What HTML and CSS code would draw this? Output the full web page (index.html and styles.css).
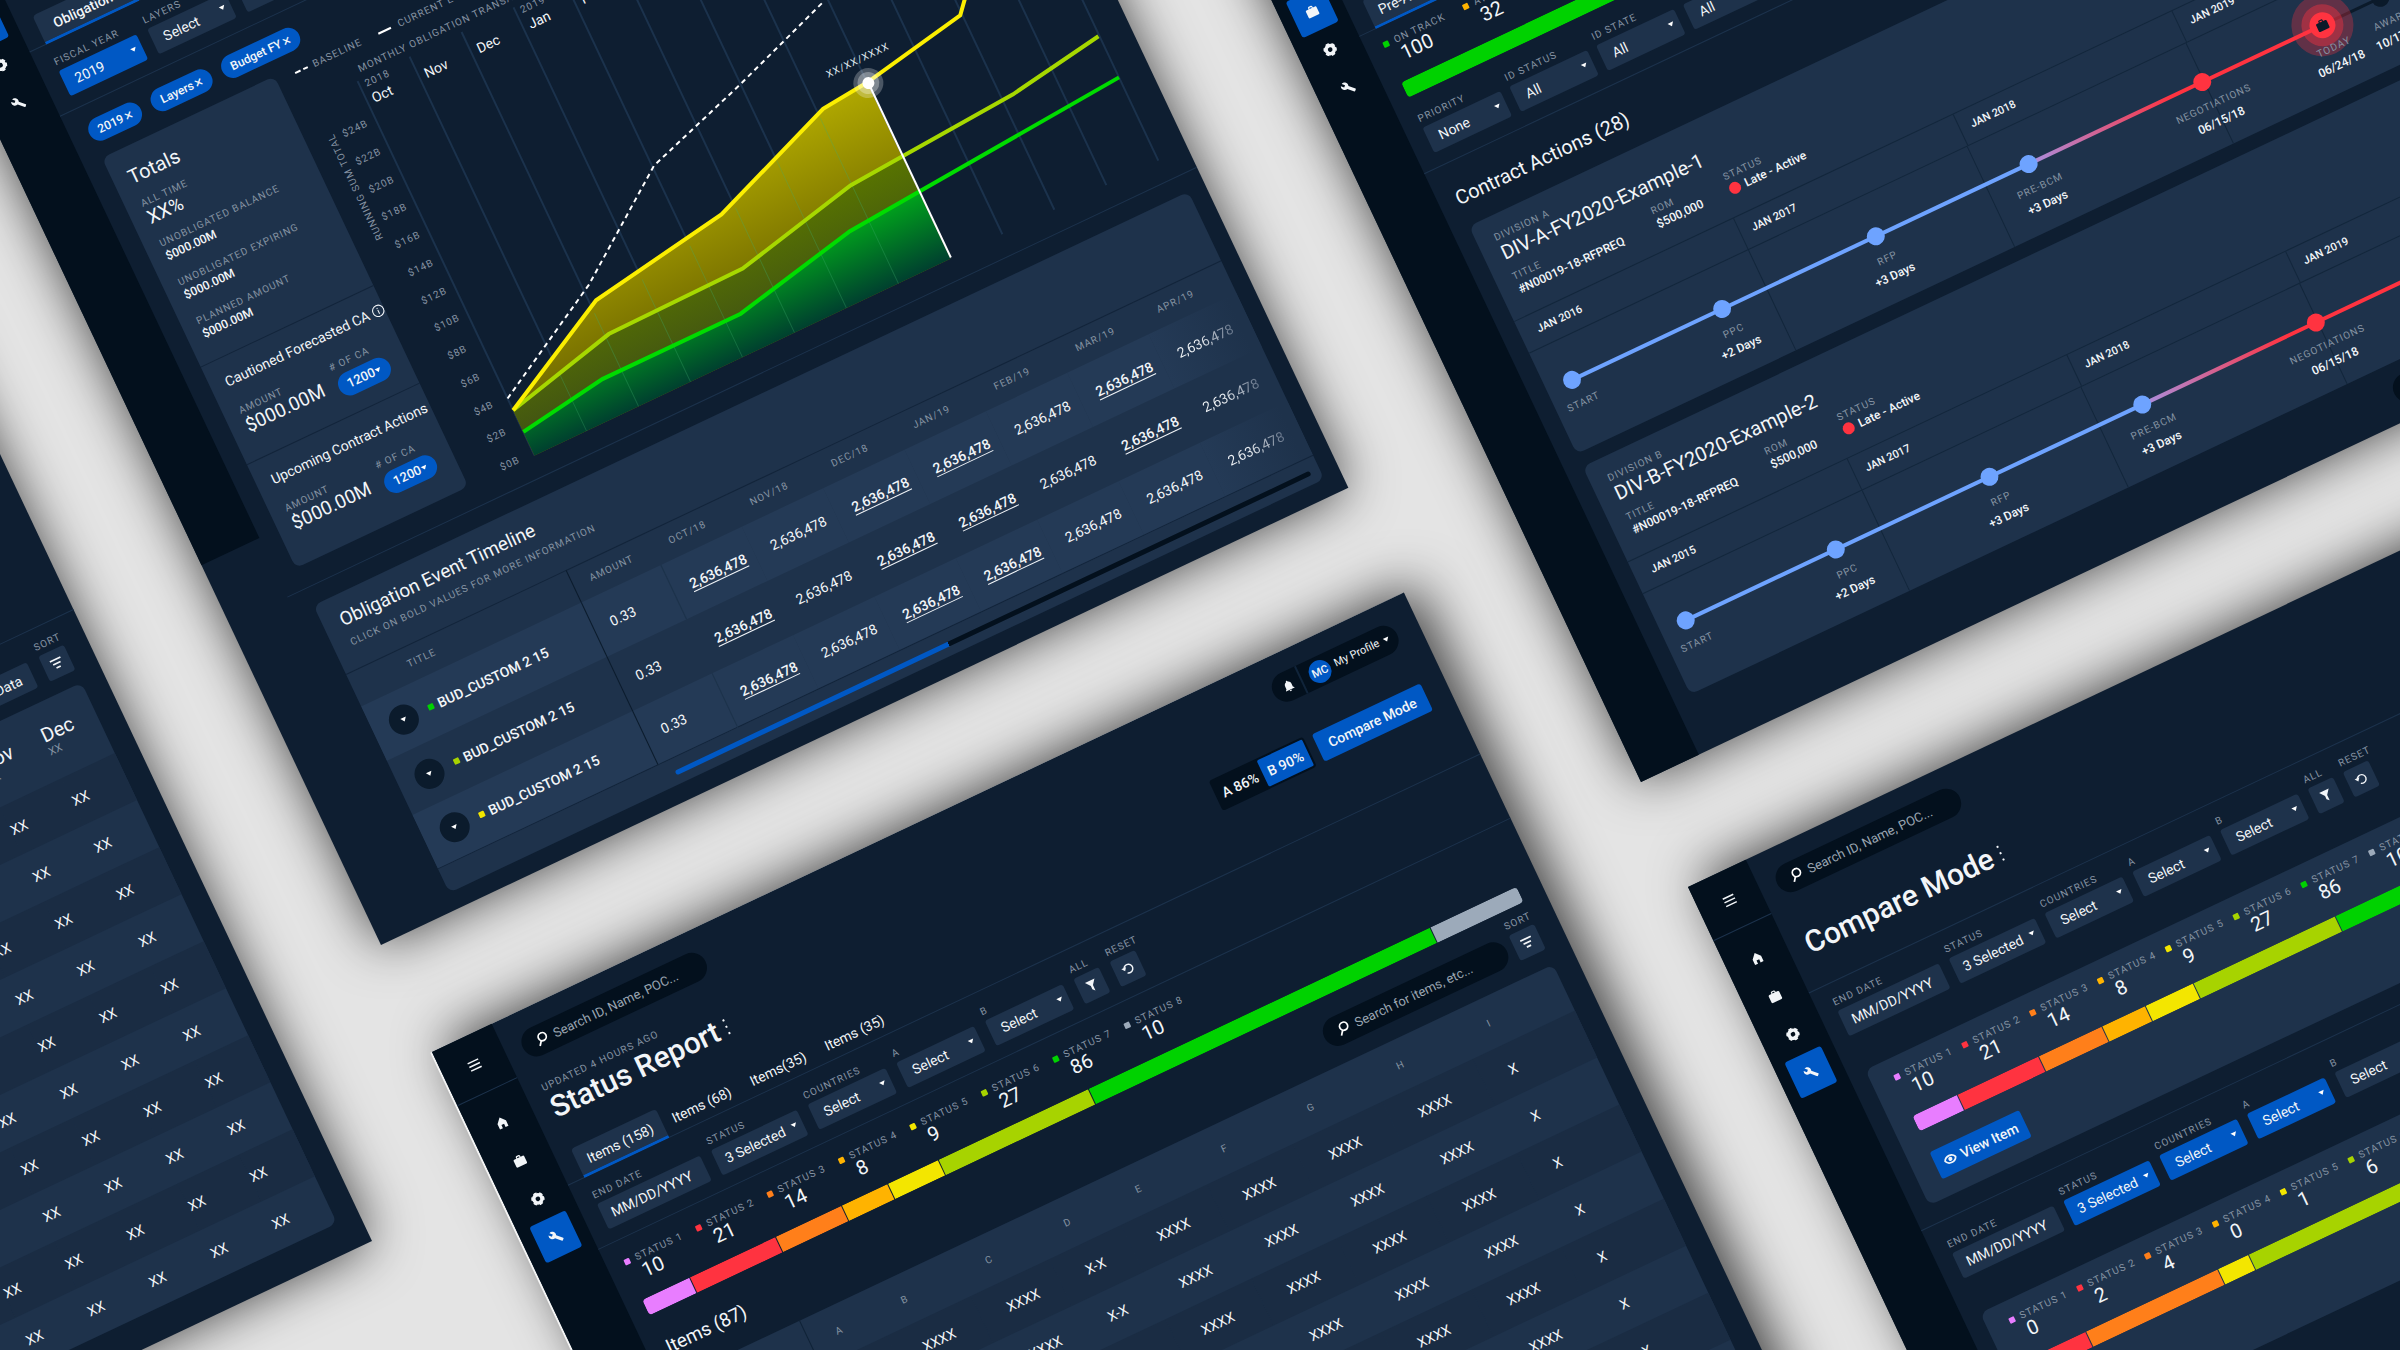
FILE: index.html
```html
<!DOCTYPE html>
<html lang="en">
<head>
<meta charset="utf-8">
<title>Program dashboards</title>
<link rel="stylesheet" href="styles.css">
</head>
<body>
<svg class="sprite" aria-hidden="true">
  <symbol id="i-menu" viewBox="0 0 24 24"><path d="M2 5h20M2 12h20M2 19h20" stroke="currentColor" stroke-width="2.500"/></symbol>
  <symbol id="i-home" viewBox="0 0 24 24"><path fill="currentColor" d="M9.500 21v-6h5v6H20v-10L12 2 4 11v10z"/></symbol>
  <symbol id="i-case" viewBox="0 0 24 24"><path fill="currentColor" d="M20 6h-4V4c0-1.110-.89-2-2-2h-4c-1.110 0-2 .89-2 2v2H4c-1.110 0-1.990.89-1.990 2L2 19c0 1.110.89 2 2 2h16c1.110 0 2-.89 2-2V8c0-1.110-.89-2-2-2zm-6 0h-4V4h4v2z"/></symbol>
  <symbol id="i-gear" viewBox="0 0 24 24"><circle cx="12" cy="12" r="7" fill="none" stroke="currentColor" stroke-width="6"/><circle cx="12" cy="12" r="10" fill="none" stroke="currentColor" stroke-width="3" stroke-dasharray="6 4.470"/></symbol>
  <symbol id="i-tool" viewBox="0 0 24 24"><path fill="currentColor" d="M22.700 19l-9.100-9.100c.9-2.300.4-5-1.500-6.900-2-2-5-2.400-7.400-1.300L9 6 6 9 1.600 4.700C.4 7.100.9 10.100 2.900 12.100c1.900 1.900 4.600 2.400 6.900 1.500l9.100 9.100c.4.4 1 .4 1.400 0l2.300-2.300c.5-.4.5-1.100.1-1.400z"/></symbol>
  <symbol id="i-search" viewBox="0 0 24 24"><circle cx="14" cy="9" r="7" fill="none" stroke="currentColor" stroke-width="3"/><path d="M10 14l-6 8" stroke="currentColor" stroke-width="3"/></symbol>
  <symbol id="i-bell" viewBox="0 0 24 24"><path fill="currentColor" d="M12 22c1.100 0 2-.9 2-2h-4c0 1.100.89 2 2 2zm6-6v-5c0-3.070-1.640-5.640-4.500-6.320V4c0-.83-.67-1.500-1.500-1.500s-1.500.67-1.500 1.500v.68C7.630 5.360 6 7.920 6 11v5l-2 2v1h16v-1l-2-2z"/></symbol>
  <symbol id="i-filter" viewBox="0 0 24 24"><path fill="currentColor" d="M3 3h18l-7 9v10l-4-4v-6z"/></symbol>
  <symbol id="i-reset" viewBox="0 0 24 24"><path d="M5.500 9.500A7.500 7.500 0 1 1 8 18.500" fill="none" stroke="currentColor" stroke-width="2.500"/><path fill="currentColor" d="M1 8h9l-4.500 6z"/></symbol>
  <symbol id="i-sort" viewBox="0 0 24 24"><path d="M2 5h20M5 12h14M8 19h8" stroke="currentColor" stroke-width="3"/></symbol>
  <symbol id="i-eye" viewBox="0 0 24 24"><path d="M2 12c4-8.500 16-8.500 20 0-4 8.500-16 8.500-20 0z" fill="none" stroke="currentColor" stroke-width="3"/><circle cx="12" cy="12" r="3.500" fill="currentColor"/></symbol>
  <symbol id="i-info" viewBox="0 0 24 24"><circle cx="12" cy="12" r="10.500" fill="none" stroke="currentColor" stroke-width="2"/><path d="M12 10v8M12 6v2" stroke="currentColor" stroke-width="2"/></symbol>
  <symbol id="i-dots" viewBox="0 0 4 18"><path d="M1 1h2v2H1zM1 8h2v2H1zM1 15h2v2H1z" fill="currentColor"/></symbol>
</svg>

<div class="canvas">

  <!-- Monthly table -->
  <section class="window window-months" aria-label="Monthly data">
    <main class="main">
      <div class="toolbar">
        <button class="btn btn-dark" type="button">Export Data</button>
        <div class="field"><label for="sort-months">SORT</label><button class="icon-btn" id="sort-months" type="button"><svg class="icon"><use href="#i-sort"/></svg></button></div>
      </div>
      <table class="months">
        <colgroup><col><col class="c68"><col class="c68"><col class="c68"><col class="c68"><col class="c59"></colgroup>
        <thead><tr><th></th><th>Aug<small>XX</small></th><th>Sep<small>XX</small></th><th>Oct<small>XX</small></th><th>Nov<small>XX</small></th><th>Dec<small>XX</small></th></tr></thead>
        <tbody>
          <tr><td></td><td></td><td></td><td></td><td>XX</td><td>XX</td></tr>
          <tr><td></td><td></td><td></td><td></td><td>XX</td><td>XX</td></tr>
          <tr><td></td><td></td><td></td><td>XX</td><td>XX</td><td>XX</td></tr>
          <tr><td></td><td></td><td></td><td>XX</td><td>XX</td><td>XX</td></tr>
          <tr><td></td><td></td><td></td><td>XX</td><td>XX</td><td>XX</td></tr>
          <tr><td></td><td></td><td>XX</td><td>XX</td><td>XX</td><td>XX</td></tr>
          <tr><td></td><td></td><td>XX</td><td>XX</td><td>XX</td><td>XX</td></tr>
          <tr><td></td><td></td><td>XX</td><td>XX</td><td>XX</td><td>XX</td></tr>
          <tr><td></td><td>XX</td><td>XX</td><td>XX</td><td>XX</td><td>XX</td></tr>
          <tr><td></td><td>XX</td><td>XX</td><td>XX</td><td>XX</td><td>XX</td></tr>
        </tbody>
      </table>
    </main>
  </section>

  <!-- Obligations -->
  <section class="window window-obligations" aria-label="Obligations">
    <nav class="sidebar">
      <button class="menu" type="button" aria-label="Menu"><svg class="icon"><use href="#i-menu"/></svg></button>
      <a href="#" aria-label="Home"><svg class="icon"><use href="#i-home"/></svg></a>
      <a href="#" aria-label="Contracts" class="active"><svg class="icon"><use href="#i-case"/></svg></a>
      <a href="#" aria-label="Settings"><svg class="icon"><use href="#i-gear"/></svg></a>
      <a href="#" aria-label="Tools"><svg class="icon"><use href="#i-tool"/></svg></a>
    </nav>
    <main class="main">
      <nav class="tabs tabs-wide"><a href="#" class="on">Obligations</a></nav>
      <form class="filters">
        <div class="field"><label for="o-fy">FISCAL YEAR</label><span class="select blue"><select id="o-fy"><option>2019</option></select></span></div>
        <div class="field"><label for="o-ly">LAYERS</label><span class="select"><select id="o-ly"><option>Select</option></select></span></div>
        <div class="field"><label for="o-bu">BUDGET</label><span class="select"><select id="o-bu"><option>Select</option></select></span></div>
      </form>
      <div class="tags">
        <button class="pill" type="button">2019 <i>×</i></button>
        <button class="pill" type="button">Layers <i>×</i></button>
        <button class="pill" type="button">Budget FY <i>×</i></button>
      </div>
      <div class="overview">
        <aside class="totals">
          <div class="totals-main">
            <h2>Totals</h2>
            <dl>
              <dt>ALL TIME</dt><dd class="big">XX%</dd>
              <dt>UNOBLIGATED BALANCE</dt><dd>$000.00M</dd>
              <dt>UNOBLIGATED EXPIRING</dt><dd>$000.00M</dd>
              <dt>PLANNED AMOUNT</dt><dd>$000.00M</dd>
            </dl>
          </div>
          <div class="forecast">
            <h3>Cautioned Forecasted CA <svg class="icon"><use href="#i-info"/></svg></h3>
            <div class="forecast-row">
              <div><span class="label">AMOUNT</span><strong>$000.00M</strong></div>
              <div><span class="label">&#35; OF CA</span><button class="pill pill-count" type="button">1200<span class="caret"></span></button></div>
            </div>
          </div>
          <div class="forecast">
            <h3>Upcoming Contract Actions</h3>
            <div class="forecast-row">
              <div><span class="label">AMOUNT</span><strong>$000.00M</strong></div>
              <div><span class="label">&#35; OF CA</span><button class="pill pill-count" type="button">1200<span class="caret"></span></button></div>
            </div>
          </div>
        </aside>
        <svg class="chart" viewBox="275 -831 777 454" role="img" aria-label="Monthly obligation transactions">
          <defs>
            <linearGradient id="g-y" x1="0" y1="0" x2="0" y2="1"><stop offset="0" stop-color="#b0a800"/><stop offset="1" stop-color="#5c5500"/></linearGradient>
            <linearGradient id="g-l" x1="0" y1="0" x2="0" y2="1"><stop offset="0" stop-color="#587400"/><stop offset="1" stop-color="#3c4c18"/></linearGradient>
            <linearGradient id="g-g" x1="0" y1="0" x2="0" y2="1"><stop offset="0" stop-color="#00a31c"/><stop offset="1" stop-color="#00402f"/></linearGradient>
          </defs>
          <path class="grid" d="M348-791v414M405.500-791v414M463-791v414M520.500-791v414M578-791v414M635.500-791v414M693-791v414M750.500-791v414M808-791v414M865.500-791v414M923-791v414M980.500-791v414M1038-791v414"/>
          <path fill="url(#g-y)" d="M348-427L470-491 620-515 757-567 808-572V-377H348z"/>
          <path fill="url(#g-l)" d="M348-427L467-455 616-457 749-486 808-490V-377H348z"/>
          <path fill="url(#g-g)" d="M348-403L442-417 595-417 729-445 808-451V-377H348z"/>
          <path class="grid grid-soft" d="M405.500-440v63M463-480v103M520.500-490v113M578-500v123M635.500-515v138M693-540v163M750.500-560v183"/>
          <path d="M348-440L470-508 580-588 691-624 804-664" fill="none" stroke="#fff" stroke-width="2" stroke-dasharray="5 4"/>
          <path d="M348-403L442-417 595-417 729-445 1038-469" fill="none" stroke="#00dc00" stroke-width="4"/>
          <path d="M348-427L467-455 616-457 749-486 935-499 1037-515" fill="none" stroke="#a6d800" stroke-width="4"/>
          <path d="M348-427L470-491 620-515 757-567 808-572 921-593 975-655" fill="none" stroke="#fbee00" stroke-width="4"/>
          <path d="M809-571V-378" stroke="#fff" stroke-width="2"/>
          <circle cx="809" cy="-571" r="15" fill="#fff" opacity=".25"/><circle cx="809" cy="-571" r="11" fill="#fff" opacity=".3"/><circle cx="809" cy="-571" r="6" fill="#fff"/>
          <text class="cap light" x="775" y="-593">XX/XX/XXXX</text>
          <path d="M295-825h14" stroke="#fff" stroke-width="2" stroke-dasharray="6 3"/><text class="cap" x="315" y="-822">BASELINE</text>
          <path d="M387-825h14" stroke="#fff" stroke-width="2"/><text class="cap" x="409" y="-822">CURRENT ESTIMATE</text>
          <text class="cap" x="354" y="-798">MONTHLY OBLIGATION TRANSACTIONS</text>
          <text class="cap" x="354" y="-782">2018</text><text class="cap" x="526" y="-782">2019</text>
          <g class="month"><text x="354" y="-764">Oct</text><text x="412" y="-764">Nov</text><text x="470" y="-764">Dec</text><text x="527" y="-764">Jan</text><text x="585" y="-764">Feb</text></g>
          <g class="cap">
            <text x="312" y="-746">$24B</text><text x="312" y="-715">$22B</text><text x="312" y="-684">$20B</text><text x="312" y="-654">$18B</text><text x="312" y="-623">$16B</text><text x="312" y="-592">$14B</text><text x="312" y="-561">$12B</text><text x="312" y="-531">$10B</text><text x="312" y="-500">$8B</text><text x="312" y="-469">$6B</text><text x="312" y="-438">$4B</text><text x="312" y="-408">$2B</text><text x="312" y="-377">$0B</text>
          </g>
          <text class="cap" transform="translate(304 -638) rotate(-90)">RUNNING SUM TOTAL</text>
        </svg>
      </div>
      <div class="rule"></div>
      <section class="card timeline">
        <header><h2>Obligation Event Timeline</h2><p>CLICK ON BOLD VALUES FOR MORE INFORMATION</p></header>
        <table>
          <colgroup><col class="c243"><col class="c88"><col class="c90"><col class="c90"><col class="c90"><col class="c90"><col class="c90"><col class="c90"><col></colgroup>
          <thead><tr><th class="t">TITLE</th><th>AMOUNT</th><th>OCT/18</th><th>NOV/18</th><th>DEC/18</th><th>JAN/19</th><th>FEB/19</th><th>MAR/19</th><th>APR/19</th></tr></thead>
          <tbody>
            <tr><td><div class="event"><button type="button" aria-label="Expand"><span class="caret"></span></button><i class="dot green"></i>BUD_CUSTOM 2 15</div></td><td>0.33</td><td><a href="#">2,636,478</a></td><td>2,636,478</td><td><a href="#">2,636,478</a></td><td><a href="#">2,636,478</a></td><td>2,636,478</td><td><a href="#">2,636,478</a></td><td>2,636,478</td></tr>
            <tr><td><div class="event"><button type="button" aria-label="Expand"><span class="caret"></span></button><i class="dot lime"></i>BUD_CUSTOM 2 15</div></td><td>0.33</td><td><a href="#">2,636,478</a></td><td>2,636,478</td><td><a href="#">2,636,478</a></td><td><a href="#">2,636,478</a></td><td>2,636,478</td><td><a href="#">2,636,478</a></td><td>2,636,478</td></tr>
            <tr><td><div class="event"><button type="button" aria-label="Expand"><span class="caret"></span></button><i class="dot yellow"></i>BUD_CUSTOM 2 15</div></td><td>0.33</td><td><a href="#">2,636,478</a></td><td>2,636,478</td><td><a href="#">2,636,478</a></td><td><a href="#">2,636,478</a></td><td>2,636,478</td><td>2,636,478</td><td>2,636,478</td></tr>
          </tbody>
        </table>
        <div class="scroll"><span></span></div>
      </section>
    </main>
  </section>

  <!-- Contract actions -->
  <section class="window window-contracts" aria-label="Contract actions">
    <nav class="sidebar">
      <button class="menu" type="button" aria-label="Menu"><svg class="icon"><use href="#i-menu"/></svg></button>
      <a href="#" aria-label="Home"><svg class="icon"><use href="#i-home"/></svg></a>
      <a href="#" aria-label="Contracts" class="active"><svg class="icon"><use href="#i-case"/></svg></a>
      <a href="#" aria-label="Settings"><svg class="icon"><use href="#i-gear"/></svg></a>
      <a href="#" aria-label="Tools"><svg class="icon"><use href="#i-tool"/></svg></a>
    </nav>
    <main class="main">
      <nav class="tabs"><a href="#" class="on">Pre-Award (132)</a></nav>
      <div class="summary">
        <ul class="legend">
          <li><span class="green">ON TRACK</span><b>100</b></li>
          <li><span class="amber">AT RISK</span><b>32</b></li>
        </ul>
        <div class="bar"><span class="green" style="flex-grow:1"></span></div>
      </div>
      <form class="filters">
        <div class="field"><label for="c-pr">PRIORITY</label><span class="select"><select id="c-pr"><option>None</option></select></span></div>
        <div class="field"><label for="c-st">ID STATUS</label><span class="select"><select id="c-st"><option>All</option></select></span></div>
        <div class="field"><label for="c-sa">ID STATE</label><span class="select"><select id="c-sa"><option>All</option></select></span></div>
        <div class="field"><label for="c-di">DIVISION</label><span class="select"><select id="c-di"><option>All</option></select></span></div>
      </form>
      <h2>Contract Actions (28)</h2>
      <article class="card contract">
        <header>
          <span class="label">DIVISION A</span><h3>DIV-A-FY2020-Example-1</h3>
          <dl><div><dt>TITLE</dt><dd>#N00019-18-RFPREQ</dd></div><div><dt>ROM</dt><dd>$500,000</dd></div><div><dt>STATUS</dt><dd class="late">Late - Active</dd></div></dl>
        </header>
        <div class="years"><span>JAN 2016</span><span>JAN 2017</span><span>JAN 2018</span><span>JAN 2019</span></div>
        <svg class="track" viewBox="0 0 968 111">
          <defs><linearGradient id="g-t" gradientUnits="userSpaceOnUse" x1="532" y1="0" x2="691" y2="0"><stop offset="0" stop-color="#a98fe0"/><stop offset="1" stop-color="#ff3340"/></linearGradient></defs>
          <path class="tick" d="M242 0v111M484 0v111M726 0v111"/>
          <path d="M27 42H532" stroke="#6ea3ff" stroke-width="4"/><path d="M532 40h192v4H532z" fill="url(#g-t)"/><path d="M724 42h133" stroke="#ff3340" stroke-width="4"/><path d="M857 42h64" stroke="#0b1a2a" stroke-width="3"/>
          <g fill="#6ea3ff"><circle cx="27" cy="42" r="9"/><circle cx="193" cy="42" r="9"/><circle cx="363" cy="42" r="9"/><circle cx="532" cy="42" r="9"/></g>
          <g fill="#ff3340"><circle cx="724" cy="42" r="9"/><circle cx="857" cy="42" r="31" opacity=".3"/><circle cx="857" cy="42" r="21" opacity=".4"/><circle cx="857" cy="42" r="13"/></g><circle cx="921" cy="42" r="9" fill="#0b1a2a"/>
          <use href="#i-case" x="850" y="35" width="14" height="14" color="#0b1a2a"/>
          <g class="step"><text x="28" y="70">START</text><text x="194" y="70">PPC</text><text x="364" y="70">RFP</text><text x="533" y="70">PRE-BCM</text><text x="725" y="70">NEGOTIATIONS</text><text x="858" y="70">TODAY</text><text x="922" y="70">AWARD</text></g>
          <g class="when"><text x="194" y="89">+2 Days</text><text x="364" y="89">+3 Days</text><text x="533" y="89">+3 Days</text><text x="725" y="89">06/15/18</text><text x="858" y="89">06/24/18</text><text x="922" y="89">10/17/18</text></g>
        </svg>
      </article>
      <article class="card contract">
        <header>
          <span class="label">DIVISION B</span><h3>DIV-B-FY2020-Example-2</h3>
          <dl><div><dt>TITLE</dt><dd>#N00019-18-RFPREQ</dd></div><div><dt>ROM</dt><dd>$500,000</dd></div><div><dt>STATUS</dt><dd class="late">Late - Active</dd></div></dl>
        </header>
        <div class="years"><span>JAN 2015</span><span>JAN 2017</span><span>JAN 2018</span><span>JAN 2019</span></div>
        <svg class="track" viewBox="0 0 968 111">
          <path class="tick" d="M242 0v111M484 0v111M726 0v111"/>
          <path d="M27 42H532" stroke="#6ea3ff" stroke-width="4"/><path d="M532 40h192v4H532z" fill="url(#g-t)"/><path d="M724 42h133" stroke="#ff3340" stroke-width="4"/>
          <g fill="#6ea3ff"><circle cx="27" cy="42" r="9"/><circle cx="193" cy="42" r="9"/><circle cx="363" cy="42" r="9"/><circle cx="532" cy="42" r="9"/></g><circle cx="724" cy="42" r="9" fill="#ff3340"/>
          <g class="step"><text x="28" y="70">START</text><text x="194" y="70">PPC</text><text x="364" y="70">RFP</text><text x="533" y="70">PRE-BCM</text><text x="725" y="70">NEGOTIATIONS</text></g>
          <g class="when"><text x="194" y="89">+2 Days</text><text x="364" y="89">+3 Days</text><text x="533" y="89">+3 Days</text><text x="725" y="89">06/15/18</text></g>
        </svg>
      </article>
      <footer><span class="pager"></span></footer>
    </main>
  </section>

  <!-- Status report -->
  <section class="window window-status" aria-label="Status report">
    <nav class="sidebar">
      <button class="menu" type="button" aria-label="Menu"><svg class="icon"><use href="#i-menu"/></svg></button>
      <a href="#" aria-label="Home"><svg class="icon"><use href="#i-home"/></svg></a>
      <a href="#" aria-label="Contracts"><svg class="icon"><use href="#i-case"/></svg></a>
      <a href="#" aria-label="Settings"><svg class="icon"><use href="#i-gear"/></svg></a>
      <a href="#" aria-label="Tools" class="active"><svg class="icon"><use href="#i-tool"/></svg></a>
    </nav>
    <main class="main">
      <header class="head">
        <div class="head-row">
          <label class="search"><svg class="icon"><use href="#i-search"/></svg><input type="search" placeholder="Search ID, Name, POC..." aria-label="Search"></label>
          <div class="account"><button class="bell" type="button" aria-label="Alerts"><svg class="icon"><use href="#i-bell"/></svg></button><button class="profile" type="button"><b>MC</b>My Profile<span class="caret"></span></button></div>
        </div>
        <div class="head-row title-row">
          <div><span class="label">UPDATED 4 HOURS AGO</span><h1>Status Report<svg class="dots"><use href="#i-dots"/></svg></h1></div>
          <div class="actions"><div class="toggle"><button type="button">A 86%</button><button type="button" class="on">B 90%</button></div><button class="btn" type="button">Compare Mode</button></div>
        </div>
      </header>
      <nav class="tabs"><a href="#" class="on">Items (158)</a><a href="#">Items (68)</a><a href="#">Items(35)</a><a href="#">Items (35)</a></nav>
      <form class="filters">
        <div class="field"><label for="s-date">END DATE</label><input id="s-date" type="text" value="MM/DD/YYYY"></div>
        <div class="field"><label for="s-st">STATUS</label><span class="select wide"><select id="s-st"><option>3 Selected</option></select></span></div>
        <div class="field"><label for="s-co">COUNTRIES</label><span class="select"><select id="s-co"><option>Select</option></select></span></div>
        <div class="field"><label for="s-a">A</label><span class="select"><select id="s-a"><option>Select</option></select></span></div>
        <div class="field"><label for="s-b">B</label><span class="select"><select id="s-b"><option>Select</option></select></span></div>
        <div class="field"><label for="s-all">ALL</label><button class="icon-btn" id="s-all" type="button"><svg class="icon"><use href="#i-filter"/></svg></button></div>
        <div class="field"><label for="s-re">RESET</label><button class="icon-btn" id="s-re" type="button"><svg class="icon"><use href="#i-reset"/></svg></button></div>
      </form>
      <div class="summary">
        <ul class="legend">
          <li><span class="pink">STATUS 1</span><b>10</b></li><li><span class="red">STATUS 2</span><b>21</b></li><li><span class="orange">STATUS 3</span><b>14</b></li><li><span class="amber">STATUS 4</span><b>8</b></li><li><span class="yellow">STATUS 5</span><b>9</b></li><li><span class="lime">STATUS 6</span><b>27</b></li><li><span class="green">STATUS 7</span><b>86</b></li><li><span class="gray">STATUS 8</span><b>10</b></li>
        </ul>
        <div class="bar"><span class="pink" style="flex-grow:52"></span><span class="red" style="flex-grow:95"></span><span class="orange" style="flex-grow:73"></span><span class="amber" style="flex-grow:50"></span><span class="yellow" style="flex-grow:55"></span><span class="lime" style="flex-grow:167"></span><span class="green" style="flex-grow:379"></span><span class="gray" style="flex-grow:96"></span></div>
      </div>
      <div class="toolbar">
        <h2>Items (87)</h2>
        <label class="search"><svg class="icon"><use href="#i-search"/></svg><input type="search" placeholder="Search for items, etc..." aria-label="Search items"></label>
        <div class="field"><label for="s-sort">SORT</label><button class="icon-btn" id="s-sort" type="button"><svg class="icon"><use href="#i-sort"/></svg></button></div>
      </div>
      <table class="items">
        <colgroup><col class="c133"><col class="c73"><col class="c93"><col class="c87"><col class="c79"><col class="c95"><col class="c95"><col class="c99"><col class="c100"><col></colgroup>
        <thead><tr><th></th><th>A</th><th>B</th><th>C</th><th>D</th><th>E</th><th>F</th><th>G</th><th>H</th><th>I</th></tr></thead>
        <tbody>
          <tr><td></td><td></td><td>XXXX</td><td>XXXX</td><td>X-X</td><td>XXXX</td><td>XXXX</td><td>XXXX</td><td>XXXX</td><td>X</td></tr>
          <tr><td></td><td></td><td></td><td>XXXX</td><td>X-X</td><td>XXXX</td><td>XXXX</td><td>XXXX</td><td>XXXX</td><td>X</td></tr>
          <tr><td></td><td></td><td></td><td></td><td>X-X</td><td>XXXX</td><td>XXXX</td><td>XXXX</td><td>XXXX</td><td>X</td></tr>
          <tr><td></td><td></td><td></td><td></td><td></td><td>XXXX</td><td>XXXX</td><td>XXXX</td><td>XXXX</td><td>X</td></tr>
          <tr><td></td><td></td><td></td><td></td><td></td><td></td><td>XXXX</td><td>XXXX</td><td>XXXX</td><td>X</td></tr>
          <tr><td></td><td></td><td></td><td></td><td></td><td></td><td></td><td>XXXX</td><td>XXXX</td><td>X</td></tr>
          <tr><td></td><td></td><td></td><td></td><td></td><td></td><td></td><td></td><td></td><td>X</td></tr>
          <tr><td></td><td></td><td></td><td></td><td></td><td></td><td></td><td></td><td></td><td></td></tr>
        </tbody>
      </table>
    </main>
  </section>

  <!-- Compare mode -->
  <section class="window window-compare" aria-label="Compare mode">
    <nav class="sidebar">
      <button class="menu" type="button" aria-label="Menu"><svg class="icon"><use href="#i-menu"/></svg></button>
      <a href="#" aria-label="Home"><svg class="icon"><use href="#i-home"/></svg></a>
      <a href="#" aria-label="Contracts"><svg class="icon"><use href="#i-case"/></svg></a>
      <a href="#" aria-label="Settings"><svg class="icon"><use href="#i-gear"/></svg></a>
      <a href="#" aria-label="Tools" class="active"><svg class="icon"><use href="#i-tool"/></svg></a>
    </nav>
    <main class="main">
      <header class="head">
        <div class="head-row">
          <label class="search"><svg class="icon"><use href="#i-search"/></svg><input type="search" placeholder="Search ID, Name, POC..." aria-label="Search"></label>
        </div>
        <div class="head-row title-row"><h1>Compare Mode<svg class="dots"><use href="#i-dots"/></svg></h1></div>
      </header>
      <form class="filters plain">
        <div class="field"><label for="m-date">END DATE</label><input id="m-date" type="text" value="MM/DD/YYYY"></div>
        <div class="field"><label for="m-st">STATUS</label><span class="select wide"><select id="m-st"><option>3 Selected</option></select></span></div>
        <div class="field"><label for="m-co">COUNTRIES</label><span class="select"><select id="m-co"><option>Select</option></select></span></div>
        <div class="field"><label for="m-a">A</label><span class="select"><select id="m-a"><option>Select</option></select></span></div>
        <div class="field"><label for="m-b">B</label><span class="select"><select id="m-b"><option>Select</option></select></span></div>
        <div class="field"><label for="m-all">ALL</label><button class="icon-btn" id="m-all" type="button"><svg class="icon"><use href="#i-filter"/></svg></button></div>
        <div class="field"><label for="m-re">RESET</label><button class="icon-btn" id="m-re" type="button"><svg class="icon"><use href="#i-reset"/></svg></button></div>
      </form>
      <section class="card summary">
        <ul class="legend">
          <li><span class="pink">STATUS 1</span><b>10</b></li><li><span class="red">STATUS 2</span><b>21</b></li><li><span class="orange">STATUS 3</span><b>14</b></li><li><span class="amber">STATUS 4</span><b>8</b></li><li><span class="yellow">STATUS 5</span><b>9</b></li><li><span class="lime">STATUS 6</span><b>27</b></li><li><span class="green">STATUS 7</span><b>86</b></li><li><span class="gray">STATUS 8</span><b>10</b></li>
        </ul>
        <div class="bar"><span class="pink" style="flex-grow:52"></span><span class="red" style="flex-grow:95"></span><span class="orange" style="flex-grow:73"></span><span class="amber" style="flex-grow:50"></span><span class="yellow" style="flex-grow:55"></span><span class="lime" style="flex-grow:167"></span><span class="green" style="flex-grow:379"></span><span class="gray" style="flex-grow:96"></span></div>
        <button class="btn" type="button"><svg class="icon"><use href="#i-eye"/></svg>View Item</button>
      </section>
      <form class="filters plain second">
        <div class="field"><label for="n-date">END DATE</label><input id="n-date" type="text" value="MM/DD/YYYY"></div>
        <div class="field"><label for="n-st">STATUS</label><span class="select wide blue"><select id="n-st"><option>3 Selected</option></select></span></div>
        <div class="field"><label for="n-co">COUNTRIES</label><span class="select blue"><select id="n-co"><option>Select</option></select></span></div>
        <div class="field"><label for="n-a">A</label><span class="select blue"><select id="n-a"><option>Select</option></select></span></div>
        <div class="field"><label for="n-b">B</label><span class="select"><select id="n-b"><option>Select</option></select></span></div>
      </form>
      <section class="card summary">
        <ul class="legend">
          <li><span class="pink">STATUS 1</span><b>0</b></li><li><span class="red">STATUS 2</span><b>2</b></li><li><span class="orange">STATUS 3</span><b>4</b></li><li><span class="amber">STATUS 4</span><b>0</b></li><li><span class="yellow">STATUS 5</span><b>1</b></li><li><span class="lime">STATUS 6</span><b>6</b></li>
        </ul>
        <div class="bar"><span class="red" style="flex-grow:64"></span><span class="orange" style="flex-grow:145"></span><span class="yellow" style="flex-grow:33"></span><span class="lime" style="flex-grow:672"></span></div>
      </section>
    </main>
  </section>
</div>
</body>
</html>
```
FILE: styles.css
```css
:root {
  --bg: #0e1e31;
  --deep: #03101d;
  --card: #1e324b;
  --row: #1a2c43;
  --line: #1c324c;
  --blue: #0058c4;
  --muted: #8592a2;
  --side: 64px;
  --pitch: 79px;
}

* { box-sizing: border-box; }
body { margin: 0; font: 14px/16px Roboto, sans-serif; color: #f2f5f8; }
h1, h2, h3, p, dl, dd, ul { margin: 0; padding: 0; font-weight: 400; }
ul { list-style: none; }
a { color: inherit; text-decoration: none; }
button, input, select { font: inherit; color: inherit; border: 0; margin: 0; padding: 0; background: none; }
h2, h3 { font-size: 19px; line-height: 22px; }
h1 { display: flex; align-items: center; gap: 7px; font-size: 30px; line-height: 34px; font-weight: 500; }
table { border-collapse: collapse; table-layout: fixed; width: 100%; }
th { font-weight: 400; text-align: left; }
td, th { padding: 0; }

.sprite { position: absolute; width: 0; height: 0; }
.icon { display: block; width: 14px; height: 14px; flex: none; }
.dots { width: 4px; height: 18px; }
.label, label, dt, .cap, .step { font-size: 10px; line-height: 12px; letter-spacing: 1px; color: var(--muted); font-weight: 400; }
.label { display: block; }
.caret { display: inline-block; border: 3px solid transparent; border-top: 4px solid #fff; border-bottom: 0; }

.canvas { position: relative; height: 100vh; overflow: hidden; background: #e4e4e4; }

/* Windows laid on the canvas at an angle */
.window {
  position: absolute;
  display: flex;
  width: 1075px;
  background: var(--bg);
  transform: rotate(-25.3deg);
  transform-origin: 0 100%;
  box-shadow: 0 0 52px rgba(0, 0, 0, .7);
}
.window-months { left: -703px; top: 231px; height: 1010px; transform-origin: 100% 100%; }
.window-obligations { left: 381px; top: -191px; width: 1070px; height: 1136px; }
.window-contracts { left: 1641px; top: -191px; height: 973px; }
.window-status { --side: 66px; left: 432px; top: 1052px; height: 900px; transform-origin: 0 0; box-shadow: -2px 0 0 #f4f4f4, 14px -4px 52px rgba(0, 0, 0, .7); }
.window-compare { --pitch: 75px; left: 1688px; top: 887px; height: 900px; transform-origin: 0 0; box-shadow: 14px -4px 52px rgba(0, 0, 0, .7); }
.main { flex: 1; min-width: 0; }
.window-obligations .main, .window-contracts .main { padding-top: 147px; }

.sidebar { display: flex; flex-direction: column; align-items: center; gap: 2px; width: var(--side); background: var(--deep); }
.window-obligations .sidebar { height: 716px; }
.sidebar a { display: grid; place-items: center; width: 40px; height: 40px; border-radius: 3px; }
.sidebar a.active { background: var(--blue); }
.menu { display: grid; place-items: center; width: 100%; height: 60px; margin-bottom: 12px; border-bottom: 1px solid var(--line); }

/* Page head */
.head { padding: 20px 24px 27px 18px; }
.head-row { display: flex; justify-content: space-between; }
.title-row { height: 48px; margin-top: 22px; align-items: flex-end; }
.search { display: flex; align-items: center; gap: 6px; width: 202px; height: 30px; padding: 0 14px; border-radius: 15px; background: var(--deep); color: #fff; }
.search input { width: 100%; min-width: 0; font-size: 13px; letter-spacing: 0; outline: 0; appearance: none; }
.search input::placeholder { color: #9aa5b1; opacity: 1; }
.account { display: flex; align-items: center; width: 137px; height: 30px; border-radius: 15px; background: var(--deep); }
.bell { display: grid; place-items: center; width: 32px; height: 30px; padding-left: 3px; border-right: 2px solid #10243a; }
.profile { display: flex; align-items: center; gap: 5px; padding-left: 8px; font-size: 11px; }
.profile b { width: 23px; height: 23px; border-radius: 50%; background: var(--blue); font-weight: 500; line-height: 23px; text-align: center; }
.actions { display: flex; align-items: center; gap: 9px; }
.toggle { display: flex; padding: 2px; border-radius: 3px; background: var(--deep); font-weight: 500; }
.toggle button { width: 50px; height: 29px; border-radius: 2px; }
.toggle .on { background: var(--blue); }
.btn { display: inline-flex; align-items: center; gap: 5px; height: 30px; padding: 0 12px; border-radius: 3px; background: var(--blue); font-weight: 500; }
.btn-dark { height: 28px; background: var(--card); font-weight: 400; }

.tabs { display: flex; height: 32px; padding-left: 18px; border-bottom: 1px solid var(--line); }
.tabs a { height: 32px; padding: 8px 11px 0; }
.tabs-wide a { padding: 8px 16px 0; font-weight: 500; }
.tabs .on { border-bottom: 3px solid var(--blue); border-radius: 4px 4px 0 0; background: var(--card); }

/* Filters */
.filters { display: flex; gap: 12px; height: 71px; padding: 14px 0 0 18px; border-bottom: 1px solid var(--line); }
.field { display: flex; flex-direction: column; gap: 3px; }
.field label { white-space: nowrap; }
.field input { width: 112px; height: 28px; padding-left: 10px; border-radius: 3px; background: var(--card); }
.window-status .field input { width: 114px; }
.select { position: relative; display: block; width: 86px; height: 28px; border-radius: 3px; background: var(--card); }
.select select { width: 100%; height: 28px; padding-left: 12px; appearance: none; }
.select option { background: var(--card); }
.select::after { content: ""; position: absolute; right: 6px; top: 11px; border: 3px solid transparent; border-top: 4px solid #fff; border-bottom: 0; pointer-events: none; }
.wide { width: 95px; }
.wide select { padding-left: 10px; }
.blue { background: var(--blue); }
.icon-btn { display: grid; place-items: center; width: 28px; height: 28px; border-radius: 3px; background: var(--card); }
.field label:has(+ .icon-btn) { width: 28px; }

/* Status legend and bar */
.summary { padding: 17px 24px 0 18px; }
.legend { display: flex; }
.legend li { width: var(--pitch); flex: none; }
.legend span { display: flex; align-items: center; gap: 6px; font-size: 10px; line-height: 12px; letter-spacing: 1px; color: var(--muted); background: none; white-space: nowrap; }
.legend span::before { content: ""; width: 6px; height: 6px; border-radius: 1px; background: var(--c); }
.legend b { display: block; padding-left: 13px; font-size: 20px; line-height: 18px; font-weight: 400; }
.bar { display: flex; height: 17px; margin-top: 17px; gap: 1px; border-radius: 4px; overflow: hidden; }
.bar span { flex: 0 1 0px; background: var(--c); }
.pink { --c: #e87dff; }
.red { --c: #ff3340; }
.orange { --c: #ff7f1a; }
.amber { --c: #ffb300; }
.yellow { --c: #f3e600; }
.lime { --c: #a7d300; }
.green { --c: #00d200; }
.gray { --c: #9caaba; }

.toolbar { display: flex; align-items: flex-end; gap: 8px; padding: 9px 24px 0 18px; }
.toolbar h2 { flex: 1; padding: 0 0 4px 2px; }
.toolbar .search { height: 30px; }
.card { border-radius: 8px; background: var(--card); overflow: hidden; }

.items { margin: 17px 24px 0 18px; width: auto; min-width: calc(100% - 42px); background: var(--card); border-radius: 8px; }
.items th { height: 51px; padding-left: 28px; font-size: 10px; color: var(--muted); }
.items th:nth-child(2) { border-left: 1px solid #0f2236; }
.items td { height: 52px; padding-left: 28px; }
.items tbody tr:nth-child(odd), .months tbody tr:nth-child(odd) { background: var(--row); }
.c133 { width: 133px; }
.c73 { width: 73px; }
.c93 { width: 93px; }
.c87 { width: 87px; }
.c79 { width: 79px; }
.c95 { width: 95px; }
.c99 { width: 99px; }
.c100 { width: 100px; }

/* Compare mode */
.plain { border-top: 1px solid var(--line); border-bottom: 0; height: 94px; padding-top: 13px; }
.second { height: 100px; margin-top: 19px; padding-top: 18px; }
.window-compare .card { height: 150px; margin: 0 24px 0 18px; padding: 14px 30px 0 23px; }
.window-compare .bar { margin-top: 18px; }
.window-compare .filters { gap: 11px; }
.card .btn { margin-top: 23px; padding: 0 9px; }

/* Months */
.window-months .main { padding-top: 311px; }
.window-months .toolbar { justify-content: flex-end; gap: 13px; padding-top: 12px; border-top: 1px solid var(--line); }
.months { width: calc(100% - 108px); margin: 14px 24px 0 84px; background: var(--card); border-radius: 8px; }
.months th { height: 78px; font-size: 20px; line-height: 22px; }
.months small { display: block; font-size: 11px; line-height: 14px; color: var(--muted); }
.months td { height: 52px; }
.c68 { width: 68px; }
.c59 { width: 59px; }

/* Obligations */
.tags { display: flex; gap: 12px; padding: 16px 0 15px 19px; }
.pill { display: flex; align-items: center; gap: 2px; height: 24px; padding: 0 10px; border-radius: 12px; background: var(--blue); font-size: 12px; font-weight: 500; }
.pill i { font: 400 15px/12px Roboto, sans-serif; }
.pill-count { font-size: 13px; margin-top: 4px; gap: 1px; }
.overview { display: flex; padding: 0 18px 22px 20px; }
.totals { width: 191px; height: 454px; flex: none; border-radius: 8px; background: var(--card); }
.totals-main { height: 231px; padding: 19px 16px 0; }
.totals h2 { font-size: 20px; }
.totals dl { margin-top: 12px; }
dd { font-size: 12px; line-height: 16px; font-weight: 500; }
.totals dd { margin-bottom: 15px; }
.totals .big { margin-bottom: 12px; font-size: 19px; line-height: 20px; font-weight: 400; }
.forecast { height: 108px; padding: 16px 0 0 16px; border-top: 1px solid #12243a; }
.forecast h3 { display: flex; align-items: center; gap: 4px; font-size: 14px; line-height: 16px; white-space: nowrap; }
.forecast h3 .icon { width: 13px; height: 13px; }
.forecast-row { display: flex; gap: 14px; margin-top: 18px; }
.forecast strong { display: block; font-size: 19px; line-height: 22px; font-weight: 400; }
.chart { flex: 1; height: 454px; overflow: visible; }
.grid { fill: none; stroke: #1b324c; stroke-width: 2; }
.grid-soft { stroke: #3fb070; stroke-width: 1; opacity: .3; }
.cap { fill: var(--muted); }
.light { fill: #dfe5ec; }
.month { fill: #f2f5f8; font-size: 14px; }
.rule { height: 19px; border-top: 1px solid var(--line); }
.timeline { margin: 0 18px 0 20px; }
.timeline header { height: 76px; padding: 15px 18px 0; }
.timeline p { margin-top: 7px; font-size: 10px; line-height: 12px; letter-spacing: 1px; color: var(--muted); }
.timeline table { border-top: 1px solid #12243a; border-bottom: 1px solid #12243a; }
.timeline th { height: 35px; padding-left: 18px; font-size: 10px; letter-spacing: 1px; color: var(--muted); }
.timeline th.t { padding-left: 60px; }
.timeline td { height: 60px; padding-left: 18px; }
.timeline tr > :nth-child(2) { border-left: 1px solid #0b1b2c; }
.timeline tbody tr:nth-child(odd) { background: linear-gradient(90deg, #243a56 90%, var(--card) 99%); }
.timeline tbody tr:nth-child(odd) td:nth-child(3) { border-left: 1px solid #1c324a; }
.timeline td:last-child { color: transparent; background: linear-gradient(90deg, #f2f5f8 40%, #66758a 80%) text; }
.timeline td a { font-weight: 500; border-bottom: 1px solid #f2f5f8; }
.event { display: flex; align-items: center; font-weight: 500; }
.event button { display: grid; place-items: center; width: 30px; height: 30px; border-radius: 50%; background: #0b1b2c; }
.dot { width: 6px; height: 6px; margin: 0 5px 0 12px; border-radius: 1px; background: var(--c); }
.scroll { height: 26px; padding: 12px 10px 0 256px; }
.scroll span { display: block; height: 5px; border-radius: 3px; background: linear-gradient(90deg, var(--blue) 43%, #03101d 43%); }
.c243 { width: 243px; }
.c88 { width: 88px; }
.c90 { width: 90px; }

/* Contracts */
.window-contracts { --pitch: 88px; }
.window-contracts .summary { padding: 12px 24px 0 18px; }
.window-contracts .filters { gap: 10px; height: 76px; padding-top: 18px; }
.window-contracts h2 { padding: 25px 18px 19px; font-size: 20px; }
.contract { margin: 0 24px 14px 18px; height: 252px; }
.contract header { height: 105px; padding: 16px 18px 0; }
.contract h3 { font-size: 20px; }
.contract dl { display: grid; grid-template-columns: 153px 80px auto; margin-top: 9px; }
.late::before { content: ""; display: inline-block; width: 12px; height: 12px; margin-right: 5px; border-radius: 50%; background: #ff3340; vertical-align: -2px; }
.years { display: grid; grid-template-columns: repeat(4, 1fr); height: 36px; border: 1px solid #12263b; border-width: 1px 0; font-size: 11px; line-height: 34px; font-weight: 500; }
.years span { padding-left: 12px; border-left: 1px solid #12263b; }
.years span:first-child { padding-left: 18px; border-left: 0; }
.track { display: block; width: 100%; height: 111px; }
.tick { stroke: #12263b; }
.step { fill: var(--muted); text-anchor: middle; }
.when { fill: #f2f5f8; font-size: 12px; font-weight: 500; text-anchor: middle; }
.window-contracts footer { display: flex; justify-content: flex-end; padding: 0 24px; }
.pager { width: 204px; height: 30px; border-radius: 15px; background: var(--deep); }
```
